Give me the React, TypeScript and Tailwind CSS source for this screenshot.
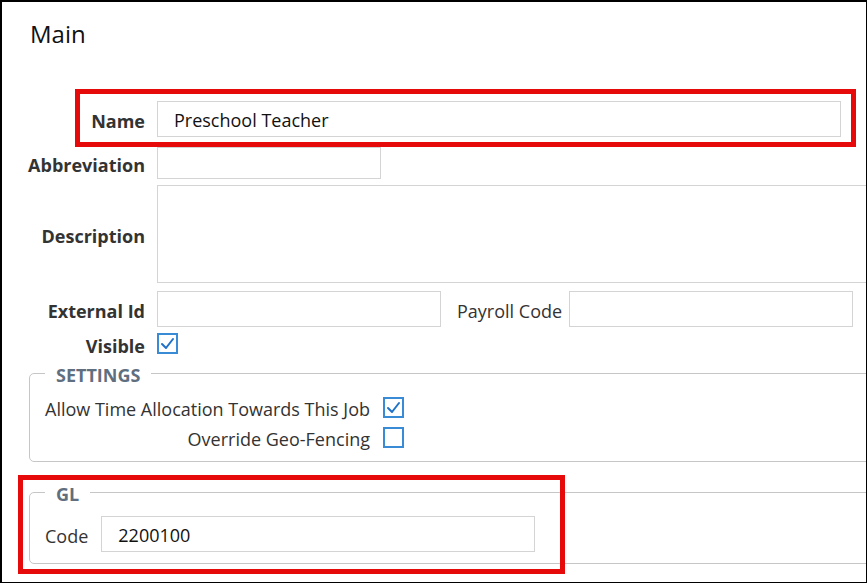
import React from 'react'

const Checkbox: React.FC<{ checked?: boolean }> = ({ checked }) => (
  <span className="flex h-[21px] w-[21px] shrink-0 items-center justify-center border-2 border-[#3a8bd6] bg-white">
    {checked && (
      <svg viewBox="0 0 17 17" className="h-[17px] w-[17px]">
        <path d="M3 9 L7 13 L14 4" fill="none" stroke="#1f72c8" strokeWidth="2" strokeLinecap="round" strokeLinejoin="round" />
      </svg>
    )}
  </span>
)

const Input: React.FC<{ value?: string; className?: string }> = ({ value, className }) => (
  <div className={`flex items-center border border-[#d4d4d4] bg-white pl-4 pt-[3px] text-[18px] text-[#111] ${className ?? ''}`}>
    {value}
  </div>
)

const Label: React.FC<{ children: React.ReactNode }> = ({ children }) => (
  <div className="w-[125px] shrink-0 pt-[4px] text-right text-[18px] font-bold leading-[24px] text-[#333]">{children}</div>
)

export default function App() {
  return (
    <div
      className="relative h-[583px] w-[867px] overflow-hidden border-t-2 border-l-2 border-r border-b border-black bg-white text-[#333]"
      style={{ fontFamily: '"Open Sans", "Noto Sans", sans-serif' }}
    >
      <div className="mt-[16px] pl-[28px] text-[24px] leading-[32px] text-[#111]">Main</div>

      <div className="pl-[18px]">
        {/* Name */}
        <div className="mt-[51px] flex items-center gap-[12px]">
          <Label>Name</Label>
          <Input value="Preschool Teacher" className="h-[36px] w-[684px]" />
        </div>

        {/* Abbreviation */}
        <div className="mt-[10px] flex items-center gap-[12px]">
          <Label>Abbreviation</Label>
          <Input className="h-[32px] w-[224px]" />
        </div>

        {/* Description */}
        <div className="mt-[6px] flex items-center gap-[12px]">
          <Label>Description</Label>
          <Input className="h-[98px] w-[740px] shrink-0" />
        </div>

        {/* External Id / Payroll Code */}
        <div className="mt-[8px] flex items-center">
          <Label>External Id</Label>
          <Input className="ml-[12px] h-[36px] w-[284px]" />
          <div className="ml-[16px] pt-[4px] text-[18px] text-[#333]">Payroll Code</div>
          <Input className="ml-[7px] h-[36px] w-[284px]" />
        </div>

        {/* Visible */}
        <div className="mt-[6px] flex h-[21px] items-center gap-[12px]">
          <Label>Visible</Label>
          <Checkbox checked />
        </div>
      </div>

      {/* Settings */}
      <fieldset className="ml-[27px] mt-[5px] w-[880px] rounded-[5px] border border-[#c6c6c6] pb-[13px] pl-[15px] pt-[10px]">
        <legend className="px-[11px] pt-[4px] text-[18px] font-bold leading-[24px] text-[#5f6f7f]">SETTINGS</legend>
        <div className="grid w-max auto-rows-[21px] grid-cols-[auto_auto] items-center gap-x-[13px] gap-y-[9px] text-[18px] leading-[21px] text-[#333]">
          <div className="pt-[4px] text-right">Allow Time Allocation Towards This Job</div>
          <Checkbox checked />
          <div className="pt-[4px] text-right">Override Geo-Fencing</div>
          <Checkbox />
        </div>
      </fieldset>

      {/* GL */}
      <fieldset className="ml-[27px] mt-[16px] w-[880px] rounded-[5px] border border-[#c6c6c6] pb-[11px] pl-[15px] pt-[10px]">
        <legend className="px-[11px] pt-[4px] text-[18px] font-bold leading-[24px] text-[#5f6f7f]">GL</legend>
        <div className="flex items-center gap-[13px] text-[18px] text-[#333]">
          <div className="pt-[4px]">Code</div>
          <Input value="2200100" className="h-[36px] w-[434px]" />
        </div>
      </fieldset>

      {/* annotation boxes */}
      <div className="pointer-events-none absolute left-[73px] top-[87px] h-[58px] w-[781px] border-[5px] border-[#e60a0a]" />
      <div className="pointer-events-none absolute left-[16px] top-[473px] h-[99px] w-[547px] border-[5px] border-[#e60a0a]" />
    </div>
  )
}
